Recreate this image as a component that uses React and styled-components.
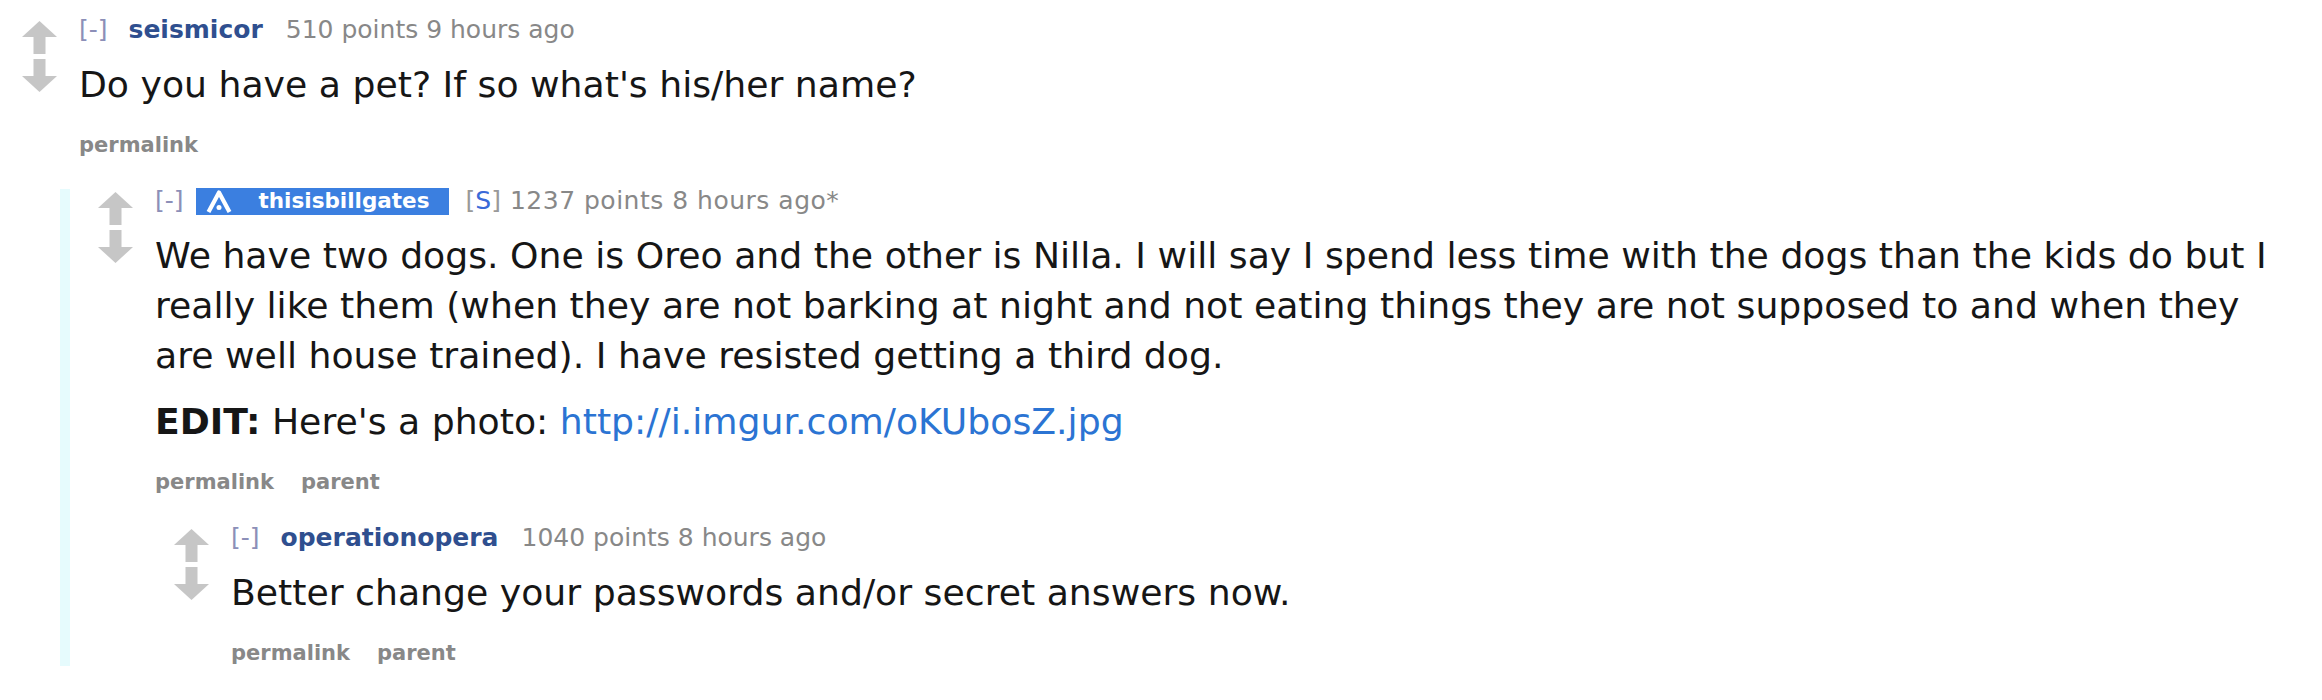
import React from 'react';
import styled, { createGlobalStyle } from 'styled-components';

const GlobalStyle = createGlobalStyle`
  html, body {
    margin: 0;
    padding: 0;
    background: #fff;
  }
  body {
    font-family: "DejaVu Sans", Verdana, sans-serif;
    color: #161616;
  }
`;

const Page = styled.div`
  width: 2322px;
  height: 700px;
  overflow: hidden;
  padding-top: 18px;
  box-sizing: border-box;
`;

const Thing = styled.div`
  padding-left: 22px;
`;

const Row = styled.div`
  display: flex;
  align-items: flex-start;
`;

const Midcol = styled.div`
  width: 35px;
  flex-shrink: 0;
  display: flex;
  flex-direction: column;
  gap: 5px;
  padding-top: 3px;
`;

const Entry = styled.div`
  margin-left: 22px;
  min-width: 0;
`;

const Tagline = styled.div`
  display: flex;
  align-items: center;
  height: 24px;
  font-size: 25px;
  line-height: 24px;
  color: #888;
  white-space: nowrap;
`;

const Expand = styled.span`
  color: #8c8fb8;
  margin-right: 12px;
`;

const Author = styled.span`
  color: #2f4f8f;
  font-weight: bold;
  margin: 0 23px 0 9px;
`;

const Submitter = styled.span`
  display: inline-flex;
  align-items: center;
  gap: 27px;
  height: 27px;
  padding: 0 19px 0 10px;
  margin-right: 17px;
  background: #3b7fe0;
  color: #fff;
  font-size: 21.5px;
  font-weight: bold;
`;

const Flair = styled.span`
  margin-right: 9px;
  color: #999;

  b {
    font-weight: normal;
    color: #3a6ad8;
  }
`;

const Score = styled.span`
  letter-spacing: ${p => (p.$wide ? '0.5px' : '0')};
`;

const Md = styled.div`
  margin-top: 18px;
  font-size: 36.2px;
  line-height: 50px;
  white-space: nowrap;

  p {
    margin: 0;
  }
  p + p {
    margin-top: 16px;
  }
  strong {
    font-weight: bold;
  }
  a {
    color: #2b74d3;
    text-decoration: none;
  }
`;

const FlatList = styled.ul`
  display: flex;
  gap: 27px;
  list-style: none;
  margin: 22px 0 0;
  padding: 0;
  font-size: 21px;
  line-height: 26px;
  font-weight: bold;

  a {
    color: #888;
    text-decoration: none;
  }
`;

const Child = styled.div`
  margin: 31px 0 0 38px;
  padding-left: 6px;
  border-left: 10px solid ${p => (p.$line ? '#e6fbfd' : 'transparent')};
`;

const ArrowUp = () => (
  <svg width="35" height="33" viewBox="0 0 35 33">
    <polygon points="17.5,0 35,16 23.5,16 23.5,33 11.5,33 11.5,16 0,16" fill="#c6c6c6" />
  </svg>
);

const ArrowDown = () => (
  <svg width="35" height="33" viewBox="0 0 35 33">
    <polygon points="11.5,0 23.5,0 23.5,17 35,17 17.5,33 0,17 11.5,17" fill="#c6c6c6" />
  </svg>
);

const BadgeIcon = () => (
  <svg width="26" height="23" viewBox="0 0 26 23">
    <path d="M2.5 22 L13 2.5 L23.5 22" fill="none" stroke="#fff" strokeWidth="4.2" strokeLinejoin="round" />
    <circle cx="13" cy="17.5" r="2.5" fill="#fff" />
  </svg>
);

const Comment = ({ tagline, body, buttons, children, line }) => (
  <Thing>
    <Row>
      <Midcol>
        <ArrowUp />
        <ArrowDown />
      </Midcol>
      <Entry>
        <Tagline>{tagline}</Tagline>
        <Md>{body}</Md>
        <FlatList>
          {buttons.map(b => (
            <li key={b}><a href="#">{b}</a></li>
          ))}
        </FlatList>
      </Entry>
    </Row>
    {children && <Child $line={line}>{children}</Child>}
  </Thing>
);

export default function App() {
  return (
    <Page>
      <GlobalStyle />
      <Comment
        line
        buttons={['permalink']}
        tagline={
          <>
            <Expand>[-]</Expand>
            <Author>seismicor</Author>
            <Score>510 points 9 hours ago</Score>
          </>
        }
        body={<p>Do you have a pet? If so what's his/her name?</p>}
      >
        <Comment
          buttons={['permalink', 'parent']}
          tagline={
            <>
              <Expand>[-]</Expand>
              <Submitter>
                <BadgeIcon />
                thisisbillgates
              </Submitter>
              <Flair>[<b>S</b>]</Flair>
              <Score $wide>1237 points 8 hours ago*</Score>
            </>
          }
          body={
            <>
              <p>
                We have two dogs. One is Oreo and the other is Nilla. I will say I spend less time with the dogs than the kids do but I
                <br />
                really like them (when they are not barking at night and not eating things they are not supposed to and when they
                <br />
                are well house trained). I have resisted getting a third dog.
              </p>
              <p>
                <strong>EDIT:</strong> Here's a photo: <a href="#">http://i.imgur.com/oKUbosZ.jpg</a>
              </p>
            </>
          }
        >
          <Comment
            buttons={['permalink', 'parent']}
            tagline={
              <>
                <Expand>[-]</Expand>
                <Author>operationopera</Author>
                <Score>1040 points 8 hours ago</Score>
              </>
            }
            body={<p>Better change your passwords and/or secret answers now.</p>}
          />
        </Comment>
      </Comment>
    </Page>
  );
}
